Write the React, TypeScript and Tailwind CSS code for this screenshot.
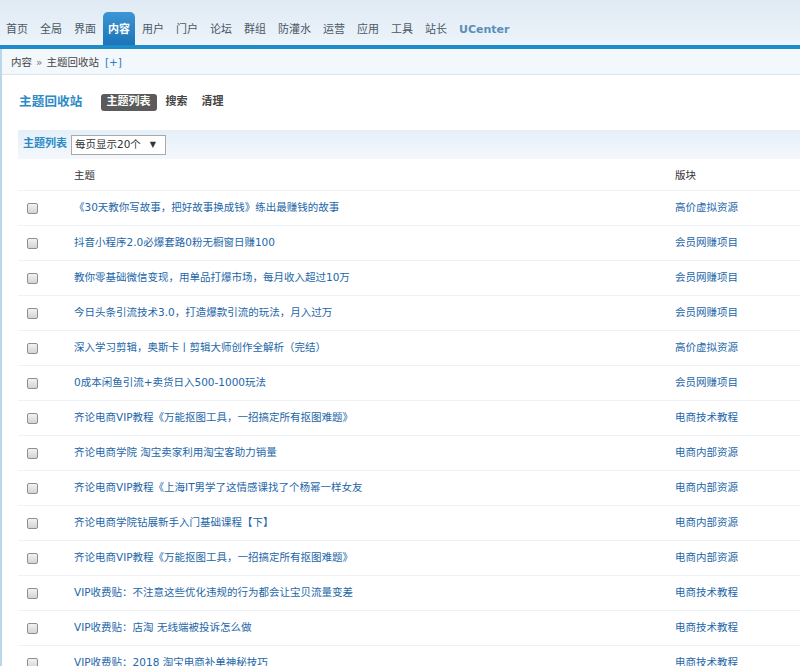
const nav = ["首页", "全局", "界面", "内容", "用户", "门户", "论坛", "群组", "防灌水", "运营", "应用", "工具", "站长", "UCenter"];

const rows = [
    { title: "《30天教你写故事，把好故事换成钱》练出最赚钱的故事", forum: "高价虚拟资源" },
    { title: "抖音小程序2.0必爆套路0粉无橱窗日赚100", forum: "会员网赚项目" },
    { title: "教你零基础微信变现，用单品打爆市场，每月收入超过10万", forum: "会员网赚项目" },
    { title: "今日头条引流技术3.0，打造爆款引流的玩法，月入过万", forum: "会员网赚项目" },
    { title: "深入学习剪辑，奥斯卡丨剪辑大师创作全解析（完结）", forum: "高价虚拟资源" },
    { title: "0成本闲鱼引流+卖货日入500-1000玩法", forum: "会员网赚项目" },
    { title: "齐论电商VIP教程《万能抠图工具，一招搞定所有抠图难题》", forum: "电商技术教程" },
    { title: "齐论电商学院 淘宝卖家利用淘宝客助力销量", forum: "电商内部资源" },
    { title: "齐论电商VIP教程《上海IT男学了这情感课找了个杨幂一样女友", forum: "电商内部资源" },
    { title: "齐论电商学院钻展新手入门基础课程【下】", forum: "电商内部资源" },
    { title: "齐论电商VIP教程《万能抠图工具，一招搞定所有抠图难题》", forum: "电商内部资源" },
    { title: "VIP收费贴：不注意这些优化违规的行为都会让宝贝流量变差", forum: "电商技术教程" },
    { title: "VIP收费贴：店淘 无线端被投诉怎么做", forum: "电商技术教程" },
    { title: "VIP收费贴：2018 淘宝电商补单神秘技巧", forum: "电商技术教程" },
];

const font = { fontFamily: '"DejaVu Sans", "Noto Sans CJK SC", sans-serif' };

export default function App() {
    return (
        <div className="w-[800px] h-[666px] overflow-hidden bg-white text-[#333]" style={font}>
            {/* top nav */}
            <div className="h-[45px] bg-gradient-to-b from-[#dfeaf4] to-[#edf4fa] flex items-end">
                {nav.map((n) =>
                    n === "内容" ? (
                        <div
                            key={n}
                            className="h-[33px] px-[5px] mx-[1px] rounded-t-[5px] bg-gradient-to-b from-[#3c95d4] to-[#1b74b8] text-white text-[11px] font-bold flex items-center pt-[4px]"
                        >
                            {n}
                        </div>
                    ) : (
                        <div
                            key={n}
                            className={`h-[33px] px-[6px] text-[11px] flex items-center pt-[4px] ${n === "UCenter" ? "font-bold text-[#5a8fb8]" : "text-[#4a5866]"}`}
                        >
                            {n}
                        </div>
                    )
                )}
            </div>
            <div className="h-[4px] bg-[#1d8cc8]" />

            <div className="border-l-[2px] border-[#bcd6ea] h-full">
                {/* breadcrumb */}
                <div className="h-[26px] bg-[#f3f8fc] border-b border-[#d9e6f0] flex items-center pl-[9px] pt-[2px] text-[10.5px] text-[#444]">
                    <span>内容</span>
                    <span className="mx-[4px] text-[#777]">»</span>
                    <span>主题回收站</span>
                    <span className="ml-[6px] text-[#2b7cbf]">[+]</span>
                </div>

                {/* title + tabs */}
                <div className="flex items-center pl-[17px] pt-[14px] h-[40px]">
                    <span className="text-[12.5px] font-bold text-[#2b8ac6] tracking-[0.2px]">主题回收站</span>
                    <span className="ml-[18px] bg-[#5b5b5b] text-white text-[11px] font-bold rounded-[3px] px-[6px] h-[17px] flex items-center">主题列表</span>
                    <span className="ml-[9px] text-[11px] font-bold text-[#444]">搜索</span>
                    <span className="ml-[14px] text-[11px] font-bold text-[#444]">清理</span>
                </div>

                {/* table */}
                <div className="ml-[16px] mt-[15px]">
                    <div className="h-[29px] bg-gradient-to-b from-[#e4eff8] to-[#f4f8fc] flex items-center pl-[5px]">
                        <span className="text-[11px] font-bold text-[#2b8ac6]">主题列表</span>
                        <div className="ml-[4px] w-[95px] h-[20px] border border-[#a9a9a9] bg-white flex items-center justify-between px-[3px] text-[10.5px] text-[#333]">
                            <span>每页显示20个</span>
                            <span className="text-[8px] mr-[6px]">▼</span>
                        </div>
                    </div>
                    <div className="h-[32px] flex items-center border-b border-[#eef2f6] text-[10.5px] text-[#333] pt-[2px]">
                        <div className="w-[56px]" />
                        <div className="w-[601px]">主题</div>
                        <div>版块</div>
                    </div>
                    {rows.map((r, i) => (
                        <div key={i} className="h-[35px] flex items-center border-b border-[#eef2f6] text-[10.5px]">
                            <div className="w-[56px] pl-[9px] flex items-center">
                                <span className="w-[11px] h-[11px] rounded-[2px] border border-[#8f8f8f] bg-gradient-to-b from-[#f2f2f2] to-[#d4d4d4]" />
                            </div>
                            <div className="w-[601px] text-[#2366a8] whitespace-nowrap">{r.title}</div>
                            <div className="text-[#2366a8] whitespace-nowrap">{r.forum}</div>
                        </div>
                    ))}
                </div>
            </div>
        </div>
    );
}
